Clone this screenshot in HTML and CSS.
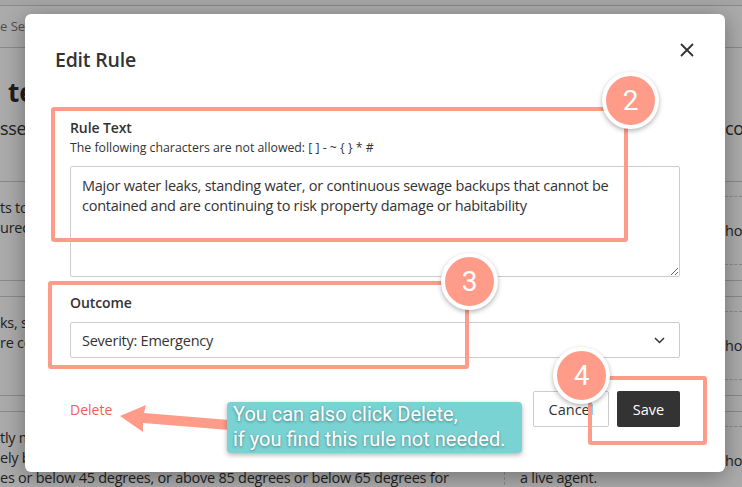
FILE: index.html
```html
<!DOCTYPE html>
<html lang="en">
<head>
<meta charset="utf-8">
<title>Edit Rule</title>
<link rel="stylesheet" href="styles.css">
</head>
<body>
<div class="page">
  <div class="topbar"></div>
  <div class="crumbs">e Settings</div>
  <h1 class="heading">te</h1>
  <div class="sub"><span class="sub-left">ssed</span><span class="sub-right">co</span></div>
  <div class="rows">
    <div class="row">
      <div class="c-left"><p>ts to</p><p>ured</p></div>
      <div class="c-mid"></div>
      <div class="c-right"><div class="dash">hoo</div></div>
    </div>
    <div class="row">
      <div class="c-left"><p>ks, st</p><p>re co</p></div>
      <div class="c-mid"></div>
      <div class="c-right"><div class="dash">hoo</div></div>
    </div>
    <div class="row">
      <div class="c-left"><p>tly m</p><p>ely b</p><p>es or below 45 degrees, or above 85 degrees or below 65 degrees for</p></div>
      <div class="c-mid dashed-left"><p>&nbsp;</p><p>&nbsp;</p><p>a live agent.</p></div>
      <div class="c-right"><div class="dash">hoo</div></div>
    </div>
  </div>
</div>

<div class="backdrop"></div>

<div class="modal">
  <div class="modal-header">
    <h2 class="modal-title">Edit Rule</h2>
    <svg class="close" width="14" height="14" viewBox="0 0 14 14"><path d="M1 1L13 13M13 1L1 13" stroke="#333" stroke-width="1.8" fill="none"/></svg>
  </div>
  <div class="modal-body">
    <div class="label">Rule Text</div>
    <div class="help">The following characters are not allowed: [ ] - ~ { } * #</div>
    <textarea class="textarea">Major water leaks, standing water, or continuous sewage backups that cannot be contained and are continuing to risk property damage or habitability</textarea>
    <div class="label label-outcome">Outcome</div>
    <div class="select"><span>Severity: Emergency</span>
      <svg width="11" height="7" viewBox="0 0 11 7"><path d="M1 1L5.5 5.5L10 1" stroke="#333" stroke-width="1.5" fill="none"/></svg>
    </div>
    <div class="footer">
      <span class="delete">Delete</span>
      <div class="buttons">
        <span class="btn btn-cancel">Cancel</span>
        <span class="btn btn-save">Save</span>
      </div>
    </div>
  </div>
</div>

<div class="mark box2"></div>
<div class="mark box3"></div>
<div class="mark box4"></div>
<svg class="arrow" width="120" height="36" viewBox="0 0 120 36"><polygon points="5,16 31,5 29,13 114,20 114,30 28,23 28,32" fill="#ff9c89"/></svg>
<div class="callout">You can also click Delete,<br>if you find this rule not needed.</div>
<div class="num n2">2</div>
<div class="num n3">3</div>
<div class="num n4">4</div>
</body>
</html>
```

FILE: styles.css
```css
* { box-sizing: border-box; }
html, body { margin: 0; padding: 0; }
body {
  width: 742px;
  height: 487px;
  overflow: hidden;
  position: relative;
  background: #fff;
  font-family: "Open Sans", "Noto Sans", sans-serif;
  color: #333;
}
p { margin: 0; }

.page { width: 742px; height: 487px; overflow: hidden; }
.topbar { height: 6px; border-bottom: 1px solid #ccc; background: #f6f6f6; }
.crumbs {
  height: 42px;
  border-bottom: 1px solid #ccc;
  font-size: 13px;
  line-height: 41px;
  color: #777;
  white-space: nowrap;
}
.heading {
  margin: 27px 0 0;
  padding-left: 8px;
  font-size: 26px;
  line-height: 34px;
  font-weight: 700;
  color: #332a2a;
}
.sub {
  margin-top: 6px;
  display: flex;
  justify-content: space-between;
  font-size: 18px;
  line-height: 26px;
  letter-spacing: -0.3px;
}
.sub-right { width: 17px; white-space: nowrap; }
.rows { margin-top: 40px; }
.row {
  height: 100px;
  border-top: 1px solid #ccc;
  border-bottom: 1px solid #ccc;
  margin-bottom: 15px;
  display: grid;
  grid-template-columns: 504px 221px 17px;
  font-size: 14.5px;
  line-height: 20px;
  letter-spacing: -0.25px;
}
.c-left { padding-top: 16px; white-space: nowrap; }
.c-mid { padding: 16px 0 0 15px; white-space: nowrap; }
.dashed-left { border-left: 1px dashed #ccc; }
.c-right { padding-top: 14px; }
.dash {
  height: 69px;
  border-top: 1px dashed #ccc;
  border-bottom: 1px dashed #ccc;
  line-height: 67px;
  white-space: nowrap;
}

.backdrop {
  position: absolute;
  inset: 0;
  background: rgba(0, 0, 0, 0.33);
}

.modal {
  position: absolute;
  left: 25px;
  top: 14px;
  width: 700px;
  height: 458px;
  background: #fff;
  border-radius: 6px;
  box-shadow: 0 4px 22px rgba(0, 0, 0, 0.35);
}
.modal-header {
  display: flex;
  justify-content: space-between;
  align-items: flex-start;
  padding: 32px 31px 0 30px;
}
.modal-title {
  margin: 0;
  font-size: 19.5px;
  line-height: 28px;
  font-weight: 600;
  letter-spacing: -0.2px;
  color: #333;
}
.close { display: block; margin-top: -3px; }
.modal-body { padding: 44px 45px 0; }
.label { font-size: 14px; line-height: 20px; font-weight: 600; color: #333; letter-spacing: -0.1px; }
.help { margin-top: 1px; font-size: 12.3px; line-height: 18px; color: #333; }
.textarea {
  display: block;
  margin-top: 9px;
  width: 610px;
  height: 111px;
  border: 1px solid #ccc;
  border-radius: 2px;
  padding: 9px 11px;
  font-family: inherit;
  font-size: 14.5px;
  letter-spacing: -0.25px;
  line-height: 20px;
  color: #333;
  resize: vertical;
  outline: none;
}
.label-outcome { margin-top: 16px; }
.select {
  margin-top: 9px;
  height: 36px;
  border: 1px solid #ccc;
  border-radius: 2px;
  padding: 0 14px 0 11px;
  display: flex;
  align-items: center;
  justify-content: space-between;
  font-size: 14.5px;
  letter-spacing: -0.25px;
}
.footer {
  margin-top: 33px;
  display: flex;
  align-items: center;
  justify-content: space-between;
}
.delete { font-size: 14px; color: #f45b5b; }
.buttons { display: flex; gap: 8px; }
.btn {
  height: 36px;
  display: flex;
  align-items: center;
  justify-content: center;
  font-size: 14.5px;
  border-radius: 2px;
}
.btn-cancel { width: 76px; border: 1px solid #ccc; color: #333; background: #fff; }
.btn-save { width: 63px; background: #333; color: #fff; }

.mark {
  position: absolute;
  border: 4px solid #ff9c89;
  border-radius: 3px;
}
.box2 { left: 51px; top: 107px; width: 577px; height: 135px; }
.box3 { left: 48px; top: 281px; width: 421px; height: 88px; }
.box4 { left: 588px; top: 376px; width: 119px; height: 69px; }

.arrow { position: absolute; left: 115px; top: 400px; }

.callout {
  position: absolute;
  left: 227px;
  top: 402px;
  width: 295px;
  height: 51px;
  padding: 0 6px;
  background: #7ad3d3;
  border-radius: 4px;
  box-shadow: 0 2px 5px rgba(0, 0, 0, 0.3);
  font-family: Roboto, "Noto Sans", sans-serif;
  font-size: 20px;
  line-height: 25px;
  color: #fff;
  text-shadow: 0 1px 3px rgba(0, 0, 0, 0.4);
  white-space: nowrap;
}

.num {
  position: absolute;
  width: 57px;
  height: 57px;
  border-radius: 50%;
  border: 4px solid #fff;
  background: #ff9c89;
  box-shadow: 0 2px 5px rgba(0, 0, 0, 0.3);
  color: #fff;
  font-family: Roboto, "Noto Sans", sans-serif;
  font-size: 28px;
  line-height: 49px;
  text-align: center;
}
.n2 { left: 602px; top: 72px; }
.n3 { left: 441px; top: 253px; }
.n4 { left: 553px; top: 347px; }
```
